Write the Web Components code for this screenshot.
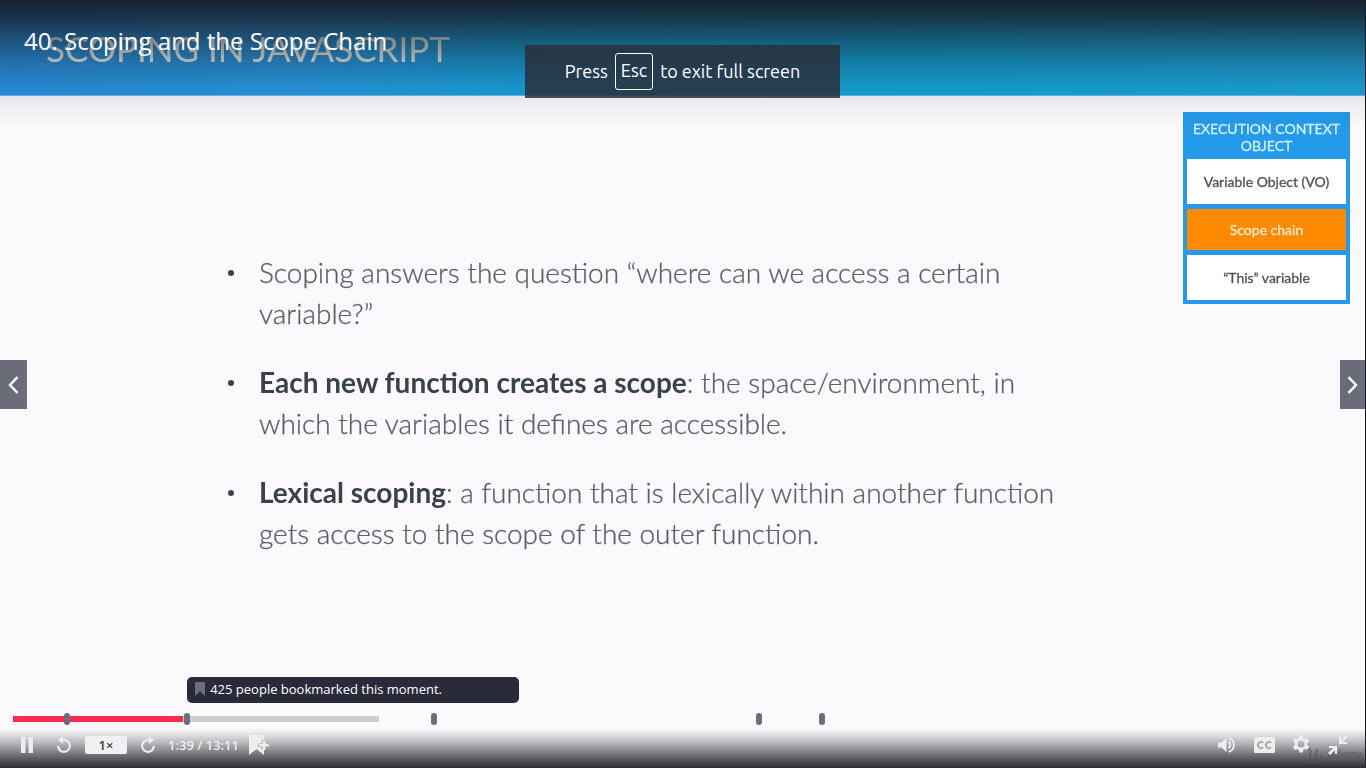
<!DOCTYPE html>
<html lang="en">
<head>
<meta charset="utf-8">
<meta name="viewport" content="width=device-width, initial-scale=1">
<title>40. Scoping and the Scope Chain</title>
<style>
html, body { height: 100%; margin: 0; }
body { background: #fbf9fc; font-family: "Open Sans", "Noto Sans", sans-serif; overflow: hidden; }
</style>
</head>
<body>
<lecture-player>
  <lecture-slide slot="video" heading="SCOPING IN JAVASCRIPT">
    <slide-point>Scoping answers the question “where can we access a certain variable?”</slide-point>
    <slide-point><b>Each new function creates a scope</b>: the space/environment, in which the variables it defines are accessible.</slide-point>
    <slide-point><b>Lexical scoping</b>: a function that is lexically within another function gets access to the scope of the outer function.</slide-point>
    <context-card slot="aside" heading="EXECUTION CONTEXT OBJECT">
      <context-cell>Variable Object (VO)</context-cell>
      <context-cell active>Scope chain</context-cell>
      <context-cell>“This” variable</context-cell>
    </context-card>
  </lecture-slide>
  <player-title slot="title">40. Scoping and the Scope Chain</player-title>
  <fullscreen-hint slot="hint"></fullscreen-hint>
  <nav-tab slot="prev" direction="prev"></nav-tab>
  <nav-tab slot="next" direction="next"></nav-tab>
  <seek-bar slot="controls"></seek-bar>
  <control-bar slot="controls"></control-bar>
</lecture-player>

<script>
const define = (name, html, setup) => {
  const template = document.createElement('template');
  template.innerHTML = html;
  customElements.define(name, class extends HTMLElement {
    constructor() {
      super();
      this.attachShadow({ mode: 'open' }).append(template.content.cloneNode(true));
    }
    connectedCallback() { if (setup) setup(this, this.shadowRoot); }
  });
};

define('lecture-player', `
<style>
:host { display: grid; min-height: 100vh; position: relative; }
.video { display: grid; }
.overlay { position: absolute; inset: 0; display: flex; flex-direction: column; justify-content: space-between; }
.top { height: 128px; box-sizing: border-box; padding: 24px 24px 0;
  background: linear-gradient(rgba(23,24,32,.92) 0, rgba(23,24,32,.8) 16px, rgba(23,24,32,.52) 40px, rgba(23,24,32,.28) 64px, rgba(23,24,32,.11) 88px, rgba(23,24,32,.06) 104px, rgba(23,24,32,0) 128px); }
.hint { position: absolute; top: 45px; left: 0; right: 1px; display: flex; justify-content: center; }
.sides { position: absolute; left: 0; right: 1px; top: 360px; display: flex; justify-content: space-between; }
.bottom { padding: 0 13px; background: linear-gradient(rgba(38,38,43,0) calc(100% - 40px), rgba(38,38,43,.15) calc(100% - 32px), rgba(38,38,43,.4) calc(100% - 22px), rgba(38,38,43,.65) calc(100% - 13px), rgba(38,38,43,.97) 100%); }
</style>
<div class="video"><slot name="video"></slot></div>
<div class="overlay">
  <header class="top"><slot name="title"></slot></header>
  <footer class="bottom"><slot name="controls"></slot></footer>
</div>
<div class="hint"><slot name="hint"></slot></div>
<nav class="sides"><slot name="prev"></slot><slot name="next"></slot></nav>`);

define('player-title', `
<style>:host { display: block; } h1 { margin: 0; font-size: 24px; line-height: 34px; font-weight: 400; color: #fff; }</style>
<h1><slot></slot></h1>`);

define('lecture-slide', `
<style>
:host { display: flex; flex-direction: column; font-family: Lato, sans-serif; background: #fbf9fc; border-right: 1px solid #15161c; }
header { height: 96px; box-sizing: border-box; padding: 26px 46px 0; background: linear-gradient(90deg, #2694e4, #289ae4 20%, #14a4e0 40%, #12a8dc 70%, #1ca8e0); border-bottom: 1px solid #6dbbe9; }
h2 { margin: 0; font-size: 35px; line-height: 44px; font-weight: 400; color: #fbfdf4; filter: blur(.6px); }
main { flex: 1; display: grid; grid-template-columns: minmax(0, 850px) 167px; justify-content: space-between; padding: 16px 15px 16px 226px; }
ul { margin: 0; padding: 140px 0 0; display: flex; flex-direction: column; gap: 28px; }
</style>
<header><h2></h2></header>
<main><ul role="list"><slot></slot></ul><slot name="aside"></slot></main>`,
(el, root) => { root.querySelector('h2').textContent = el.getAttribute('heading'); });

define('slide-point', `
<style>
:host { display: flex; font-size: 28px; line-height: 41px; font-weight: 300; color: #596166; -webkit-text-stroke: .3px #596166; filter: blur(.4px); }
.dot { flex: none; width: 33px; height: 41px; display: flex; align-items: center; }
.dot::before { content: ""; width: 6px; height: 6px; border-radius: 50%; background: #39434a; margin-left: 2px; }
::slotted(b) { font-weight: 700; color: #39434a; -webkit-text-stroke: 0; }
</style>
<span class="dot"></span><span><slot></slot></span>`,
(el) => el.setAttribute('role', 'listitem'));

define('context-card', `
<style>
:host { display: flex; flex-direction: column; gap: 5px; align-self: start; box-sizing: border-box; padding: 4px; background: #239aea; filter: blur(.4px); }
h3 { margin: 0; padding: 4px 0 0; font-size: 14px; line-height: 17px; font-weight: 400; text-align: center; color: #d3efff; -webkit-text-stroke: .3px #d3efff; }
</style>
<h3></h3><slot></slot>`,
(el, root) => { root.querySelector('h3').textContent = el.getAttribute('heading'); });

define('context-cell', `
<style>
:host { display: flex; align-items: center; justify-content: center; height: 45px; font-size: 14px; line-height: 20px; color: #4c525a; background: #fff; -webkit-text-stroke: .3px currentColor; }
:host([active]) { height: 41px; color: #ffe9c8; background: #ff8a00; }
</style><slot></slot>`);

define('fullscreen-hint', `
<style>
:host { display: flex; align-items: center; gap: 7px; box-sizing: border-box; height: 53px; padding: 0 40px; background: rgba(41,47,58,.84); color: #fff; font-family: Ubuntu, "Noto Sans", sans-serif; font-size: 18px; line-height: 24px; white-space: nowrap; }
span { padding-bottom: 2px; }
kbd { font: inherit; box-sizing: border-box; height: 37px; padding: 4px 5px; border: 1px solid #fff; border-radius: 3px; }
</style>
<span>Press</span><kbd>Esc</kbd><span>to exit full screen</span>`);

define('nav-tab', `
<style>
:host { display: block; }
button { display: flex; align-items: center; justify-content: center; width: 27px; height: 49px; padding: 0; border: 0; background: #6a6d79; }
:host([direction=next]) button { width: 25px; }
:host([direction=next]) svg { transform: scaleX(-1); }
</style>
<button type="button"><svg width="11" height="18" viewBox="0 0 11 18" fill="none" stroke="#fff" stroke-width="2.4"><path d="M9.5 1.2 2 9l7.500 7.800"/></svg></button>`,
(el, root) => root.querySelector('button').setAttribute('aria-label', el.getAttribute('direction') === 'prev' ? 'Previous' : 'Next'));

define('bookmark-tip', `
<style>
:host { display: flex; align-items: center; gap: 5px; box-sizing: border-box; width: 332px; height: 26px; padding: 0 8px 2px; border-radius: 5px; background: #292b3b; color: #fff; font-size: 13px; line-height: 18px; white-space: nowrap; }
</style>
<svg width="10" height="14" viewBox="0 0 10 14" fill="#6a6f7e"><path d="M0 0h10v14L5 9.500 0 14z"/></svg><slot></slot>`);

define('seek-bar', `
<style>
:host { display: block; position: relative; height: 12px; }
.track { display: flex; align-items: center; height: 12px; }
.played { width: 12.7%; height: 6px; background: #fa2c4c; }
.buffered { width: 14.6%; height: 6px; background: #ccced0; }
.mark { position: absolute; top: 0; width: 6px; height: 12px; margin-left: -3px; padding: 0; border: 0; border-radius: 3px; background: #686f7a; }
bookmark-tip { position: absolute; bottom: 22px; left: 13%; }
</style>
<div class="track"><div class="played"></div><div class="buffered"></div></div>
<bookmark-tip>425 people bookmarked this moment.</bookmark-tip>`,
(el, root) => {
  for (const at of [4.03, 13, 31.4, 55.7, 60.4]) {
    const mark = document.createElement('button');
    mark.className = 'mark';
    mark.type = 'button';
    mark.setAttribute('aria-label', 'Bookmark');
    mark.style.left = at + '%';
    root.append(mark);
  }
});

define('control-bar', `
<style>
:host { display: flex; align-items: center; justify-content: space-between; box-sizing: border-box; height: 43px; padding: 0 4px 4px; color: #ecedef; font-size: 13px; }
div { display: flex; align-items: center; }
.left { gap: 10px; }
.right { gap: 15px; }
button { display: flex; align-items: center; justify-content: center; width: 22px; height: 24px; padding: 0; border: 0; background: none; color: inherit; font: inherit; overflow: visible; }
.left button { width: 20px; }
.replay { margin-left: 7px; }
.left button.speed { width: 42px; height: 18px; margin: 0 1px; border-radius: 2px; background: #eff0f1; color: #3b3d48; font-weight: 600; }
time { line-height: 18px; font-weight: 600; white-space: nowrap; }
svg { flex: none; fill: currentColor; }
.mark { position: absolute; right: 4px; bottom: 6px; display: flex; align-items: center; gap: 6px; color: rgba(80,80,86,.5); font: italic 700 12px/16px Lato, sans-serif; }
.mark svg { fill: none; stroke: currentColor; stroke-width: 2; }
.right { position: relative; z-index: 1; }
</style>
<div class="left">
  <button type="button" aria-label="Pause"><svg width="12" height="16" viewBox="0 0 12 16"><path d="M0 0h4.500v16H0zM7.500 0H12v16H7.500z"/></svg></button>
  <button class="replay" type="button" aria-label="Rewind"><svg width="16" height="17" viewBox="0 0 16 17"><path d="M7 0v2.900h1A7 7 0 1 1 1 10h2.300A4.800 4.800 0 1 0 8 5.200H7V8L2 4z"/></svg></button>
  <button class="speed" type="button" aria-label="Playback rate">1×</button>
  <button type="button" aria-label="Forward"><svg width="16" height="17" viewBox="0 0 16 17"><path d="M9 0v2.900H8A7 7 0 1 0 15 10h-2.300A4.800 4.800 0 1 1 8 5.200h1V8l5-4z"/></svg></button>
  <time>1:39 / 13:11</time>
  <button type="button" aria-label="Add bookmark"><svg width="20" height="20" viewBox="0 0 20 20"><path d="M0 0h15v5h-2.500v3.500H9V12h3.500v2.500H15V20l-7.500-6L0 20z"/><path d="M13.500 6h3v3H20v2.500h-3.500V15h-3v-3.500H10V9h3.500z"/></svg></button>
</div>
<div class="right">
  <button type="button" aria-label="Volume"><svg width="19" height="16" viewBox="0 0 19 16"><path d="M0 5.500h3.500L8.500 1v14l-5-4.500H0z"/><path d="M10.500 4.600a4 4 0 0 1 0 6.800" fill="none" stroke="currentColor" stroke-width="2"/><path d="M10.500 1.200a7 7 0 0 1 0 13.600" fill="none" stroke="currentColor" stroke-width="1.800"/></svg></button>
  <button type="button" aria-label="Captions"><svg width="21" height="16" viewBox="0 0 21 16"><rect width="21" height="16" rx="1.500"/><path d="M9 5.800A3 3 0 1 0 9 10.300M17 5.800a3 3 0 1 0 0 4.500" fill="none" stroke="#a4a4a8" stroke-width="1.800"/></svg></button>
  <button type="button" aria-label="Settings"><svg width="20" height="20" viewBox="0 0 20 20"><path fill-rule="evenodd" d="M8.300.500h3.400l.5 2.600 1.700 1 2.500-.9 1.700 3-2 1.700v2.200l2 1.700-1.700 3-2.500-.9-1.700 1-.5 2.600H8.300l-.5-2.600-1.700-1-2.500.9-1.700-3 2-1.700V7.900l-2-1.700 1.700-3 2.500.9 1.700-1zM10 5.500a3.500 3.500 0 1 0 0 7 3.500 3.500 0 0 0 0-7z"/></svg></button>
  <button type="button" aria-label="Exit full screen"><svg width="20" height="20" viewBox="0 0 20 20"><path d="M11 1v8h8V7h-4.500L20 2 18 0l-5 5V1zM1 11v2h4.500L0 18l2 2 5-5v4h2v-8z"/></svg></button>
</div>
<span class="mark" aria-hidden="true"><svg width="16" height="15" viewBox="0 0 16 15"><path d="M1 3c5-3 4 2 3 6s3 6 5 1l2-8c-1 6-2 11 1 11 2 0 3-2 3-4"/></svg>udemy</span>`);
</script>
</body>
</html>
